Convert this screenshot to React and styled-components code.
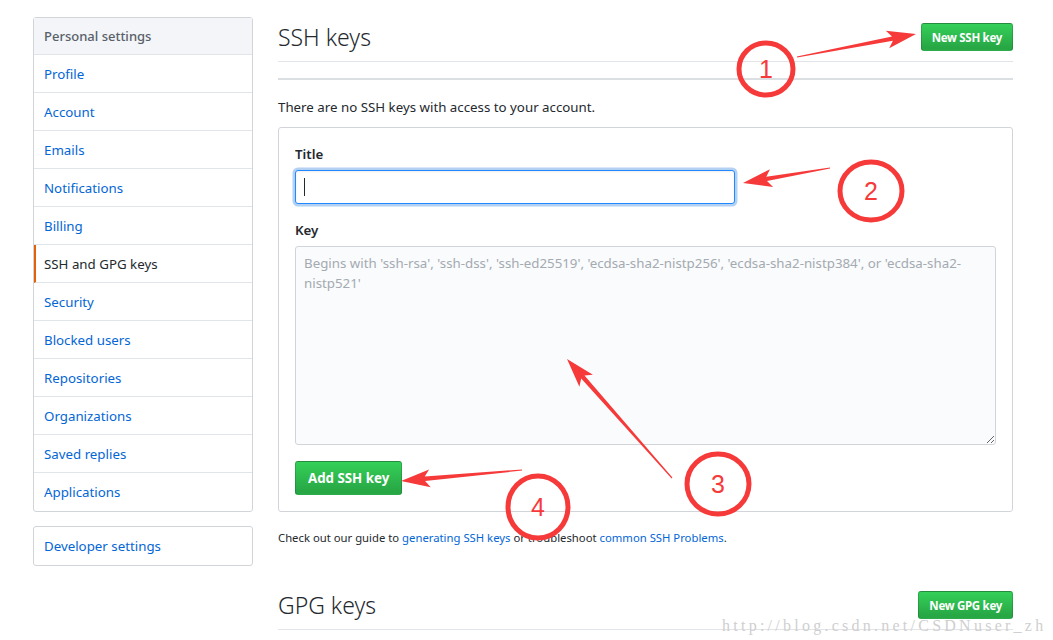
import React from 'react';
import styled, { createGlobalStyle } from 'styled-components';

const GlobalStyle = createGlobalStyle`
  body {
    margin: 0;
    background: #fff;
    font-family: "Noto Sans", "Open Sans", sans-serif;
    color: #24292e;
  }
  * { box-sizing: border-box; }
`;

const Page = styled.div`
  position: relative;
  width: 1053px;
  height: 640px;
  overflow: hidden;
  display: flex;
  gap: 25px;
  padding: 17px 0 0 33px;
`;

const Sidebar = styled.nav`
  width: 220px;
  display: flex;
  flex-direction: column;
  gap: 14px;
`;

const Menu = styled.div`
  border: 1px solid #d1d5da;
  border-radius: 3px;
  display: flex;
  flex-direction: column;
`;

const MenuHeading = styled.div`
  height: 37px;
  display: flex;
  align-items: center;
  padding: 0 10px;
  background: #f3f5f8;
  color: #586069;
  font-size: 13px;
  font-weight: 500;
  border-bottom: 1px solid #e1e4e8;
`;

const MenuItem = styled.a`
  height: 38px;
  display: flex;
  align-items: center;
  padding: 0 10px 0 ${p => (p.$selected ? '8px' : '10px')};
  font-size: 13.3px;
  color: ${p => (p.$selected ? '#24292e' : '#0366d6')};
  border-left: ${p => (p.$selected ? '2px solid #e36209' : 'none')};
  border-bottom: ${p => (p.$last ? 'none' : '1px solid #e1e4e8')};
  text-decoration: none;
`;

const Main = styled.main`
  width: 735px;
  display: flex;
  flex-direction: column;
`;

const Subhead = styled.div`
  height: 45px;
  display: flex;
  align-items: center;
  justify-content: space-between;
  padding-bottom: 4px;
  border-bottom: 1px solid #e1e4e8;
  margin-top: ${p => p.$top || '0'};
`;

const Heading = styled.h2`
  margin: 0;
  font-size: 23px;
  font-weight: 300;
  color: #24292e;
`;

const Button = styled.button`
  font-family: inherit;
  color: #fff;
  font-weight: 700;
  font-size: ${p => (p.$small ? '11.5px' : '13.3px')};
  height: ${p => (p.$small ? '28px' : '34px')};
  padding: 0 ${p => (p.$small ? '10px' : '12px')};
  letter-spacing: ${p => (p.$small ? '-0.3px' : '0')};
  border: 1px solid rgba(27, 31, 35, 0.2);
  border-radius: 3px;
  background: linear-gradient(-180deg, #34d058 0%, #28a745 90%);
  cursor: pointer;
`;

const Divider = styled.div`
  margin-top: 16px;
  border-top: 2px solid #dcdfe2;
`;

const Blank = styled.p`
  margin: 17px 0 9px;
  font-size: 13.3px;
  line-height: 21px;
`;

const FormBox = styled.form`
  border: 1px solid #d1d5da;
  border-radius: 3px;
  padding: 16px;
  display: flex;
  flex-direction: column;
  align-items: flex-start;
`;

const Label = styled.label`
  font-size: 13.3px;
  font-weight: 600;
  line-height: 21px;
  margin: ${p => p.$top || '0'} 0 5px;
`;

const InputWrap = styled.div`
  position: relative;
`;

const TitleInput = styled.input`
  width: 440px;
  height: 34px;
  padding: 6px 8px;
  font-size: 14px;
  border: 1px solid #2188ff;
  border-radius: 3px;
  outline: none;
  box-shadow: inset 0 1px 2px rgba(27, 31, 35, 0.075), 0 0 0 2.5px rgba(3, 102, 214, 0.3);
`;

const Caret = styled.span`
  position: absolute;
  left: 9px;
  top: 8px;
  width: 1px;
  height: 18px;
  background: #24292e;
`;

const KeyArea = styled.textarea`
  width: 100%;
  height: 199px;
  margin-top: 0;
  padding: 6px 8px;
  font-family: inherit;
  font-size: 13.3px;
  line-height: 20px;
  background: #fafbfc;
  border: 1px solid #d1d5da;
  border-radius: 3px;
  resize: vertical;
  margin-bottom: 16px;
  &::placeholder { color: #a3aab1; }
`;

const Note = styled.p`
  margin: 17px 0 0;
  font-size: 11.3px;
  line-height: 18px;
  color: #24292e;
`;

const Link = styled.a`
  color: #0366d6;
  text-decoration: none;
`;

const Overlay = styled.svg`
  position: absolute;
  left: 0;
  top: 0;
  pointer-events: none;
`;

const Watermark = styled.div`
  position: absolute;
  left: 722px;
  top: 619px;
  font-family: "Liberation Serif", serif;
  font-size: 16px;
  line-height: 14px;
  letter-spacing: 3.25px;
  color: #cfcfcf;
  pointer-events: none;
`;

const items = [
  'Profile', 'Account', 'Emails', 'Notifications', 'Billing', 'SSH and GPG keys',
  'Security', 'Blocked users', 'Repositories', 'Organizations', 'Saved replies', 'Applications',
];

// tapered annotation arrow: thin at tail, barbed head at tip
function arrowPoints(x1, y1, x2, y2, hl = 24, hw = 9, sw = 2.2) {
  const dx = x2 - x1, dy = y2 - y1;
  const len = Math.hypot(dx, dy);
  const ux = dx / len, uy = dy / len;
  const px = -uy, py = ux;
  const bx = x2 - ux * hl, by = y2 - uy * hl;
  const wx = x2 - ux * (hl + 5), wy = y2 - uy * (hl + 5);
  const pts = [
    [x1 + px * 0.6, y1 + py * 0.6],
    [bx + px * sw, by + py * sw],
    [wx + px * hw, wy + py * hw],
    [x2, y2],
    [wx - px * hw, wy - py * hw],
    [bx - px * sw, by - py * sw],
    [x1 - px * 0.6, y1 - py * 0.6],
  ];
  return pts.map(p => p.map(v => v.toFixed(1)).join(',')).join(' ');
}

const marks = [
  { n: '1', cx: 766, cy: 69, rx: 27, ry: 26, arrow: [797, 57, 916, 34] },
  { n: '2', cx: 871, cy: 191, rx: 31, ry: 29, arrow: [830, 168, 743, 183] },
  { n: '3', cx: 718, cy: 484, rx: 31, ry: 30, arrow: [672, 478, 567, 359] },
  { n: '4', cx: 538, cy: 507, rx: 30, ry: 31, arrow: [522, 470, 401, 481] },
];

const RED = '#f63a3a';

export default function App() {
  return (
    <>
      <GlobalStyle />
      <Page>
        <Sidebar>
          <Menu>
            <MenuHeading>Personal settings</MenuHeading>
            {items.map((it, i) => (
              <MenuItem key={it} href="#" $selected={it === 'SSH and GPG keys'} $last={i === items.length - 1}>
                {it}
              </MenuItem>
            ))}
          </Menu>
          <Menu>
            <MenuItem href="#" $last>Developer settings</MenuItem>
          </Menu>
        </Sidebar>
        <Main>
          <Subhead>
            <Heading>SSH keys</Heading>
            <Button $small type="button">New SSH key</Button>
          </Subhead>
          <Divider />
          <Blank>There are no SSH keys with access to your account.</Blank>
          <FormBox onSubmit={e => e.preventDefault()}>
            <Label>Title</Label>
            <InputWrap>
              <TitleInput />
              <Caret />
            </InputWrap>
            <Label $top="16px">Key</Label>
            <KeyArea placeholder="Begins with 'ssh-rsa', 'ssh-dss', 'ssh-ed25519', 'ecdsa-sha2-nistp256', 'ecdsa-sha2-nistp384', or 'ecdsa-sha2-nistp521'" />
            <Button type="submit">Add SSH key</Button>
          </FormBox>
          <Note>
            Check out our guide to <Link href="#">generating SSH keys</Link> or troubleshoot{' '}
            <Link href="#">common SSH Problems</Link>.
          </Note>
          <Subhead $top="38px">
            <Heading>GPG keys</Heading>
            <Button $small type="button">New GPG key</Button>
          </Subhead>
        </Main>
        <Overlay width="1053" height="640" viewBox="0 0 1053 640">
          {marks.map(m => (
            <g key={m.n}>
              <ellipse cx={m.cx} cy={m.cy} rx={m.rx} ry={m.ry} fill="none" stroke={RED} strokeWidth="5" />
              <text x={m.cx} y={m.cy + 9} textAnchor="middle" fontFamily="Liberation Sans, sans-serif" fontSize="25" fill={RED}>
                {m.n}
              </text>
              <polygon points={arrowPoints(...m.arrow)} fill={RED} />
            </g>
          ))}
        </Overlay>
        <Watermark>http://blog.csdn.net/CSDNuser_zh</Watermark>
      </Page>
    </>
  );
}
